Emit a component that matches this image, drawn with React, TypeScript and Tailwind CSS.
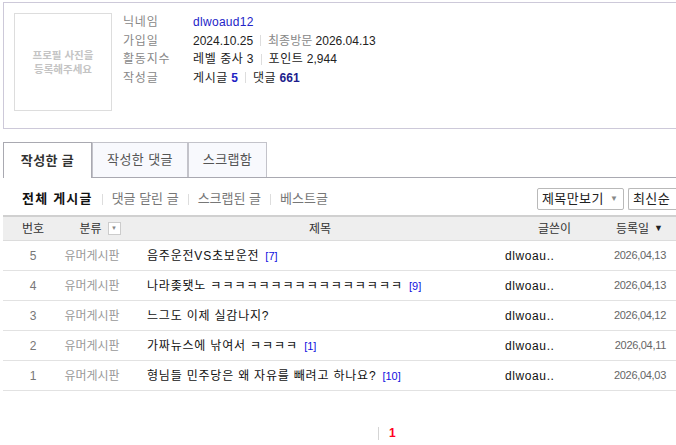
import React from "react";

type Post = {
  no: number;
  category: string;
  title: string;
  comments: number | null;
  author: string;
  date: string;
};

const POSTS: Post[] = [
  { no: 5, category: "유머게시판", title: "음주운전VS초보운전", comments: 7, author: "dlwoau..", date: "2026,04,13" },
  { no: 4, category: "유머게시판", title: "나라좆됏노 ㅋㅋㅋㅋㅋㅋㅋㅋㅋㅋㅋㅋㅋㅋㅋㅋ", comments: 9, author: "dlwoau..", date: "2026,04,13" },
  { no: 3, category: "유머게시판", title: "느그도 이제 실감나지?", comments: null, author: "dlwoau..", date: "2026,04,12" },
  { no: 2, category: "유머게시판", title: "가짜뉴스에 낚여서 ㅋㅋㅋㅋ", comments: 1, author: "dlwoau..", date: "2026,04,11" },
  { no: 1, category: "유머게시판", title: "형님들 민주당은 왜 자유를 빼려고 하나요?", comments: 10, author: "dlwoau..", date: "2026,04,03" },
];

const FONT = { fontFamily: '"Liberation Sans", "Noto Sans CJK KR", sans-serif' };
const COLS = "grid grid-cols-[60px_58px_379px_104px_1fr]";

// runs of ㅋ get a little extra spacing so they sit on a 12px pitch
function Title({ text }: { text: string }) {
  const parts = text.split(/(ㅋ+)/);
  return (
    <>
      {parts.map((part, i) =>
        part.startsWith("ㅋ") ? (
          <span key={i} className="tracking-[1px]">{part}</span>
        ) : (
          <span key={i}>{part}</span>
        )
      )}
    </>
  );
}

function Sep() {
  return <span className="mx-[7px] inline-block h-[11px] w-px bg-[#dddddd] align-[-1px]" />;
}

function ProfileRow({ label, children }: { label: string; children: React.ReactNode }) {
  return (
    <div className="flex h-[18.5px] items-center">
      <span className="w-[70px] tracking-[0.8px] text-[#888]">{label}</span>
      <span className="flex items-center text-[#222]">{children}</span>
    </div>
  );
}

export default function App() {
  const filters = ["댓글 달린 글", "스크랩된 글", "베스트글"];

  return (
    <div className="min-h-screen overflow-hidden bg-white pl-[3px] pt-[2px] text-[12px]" style={FONT}>
      {/* profile card */}
      <section className="flex h-[127px] border border-r-0 border-[#cdc9d9] pl-[10px] pt-[10px]">
        <div className="flex h-[98px] w-[98px] flex-col items-center justify-center border border-[#dddddd] text-[10.5px] font-bold leading-[14px] text-[#c4c4c4]">
          <span>프로필 사진을</span>
          <span>등록해주세요</span>
        </div>
        <div className="ml-[11px]">
          <ProfileRow label="닉네임">
            <span className="tracking-[0.3px] text-[#2323c8]">dlwoaud12</span>
          </ProfileRow>
          <ProfileRow label="가입일">
            2024.10.25<Sep />
            <span className="text-[#888]">최종방문</span>&nbsp;2026.04.13
          </ProfileRow>
          <ProfileRow label="활동지수">
            <span className="tracking-[0.6px]">레벨 중사</span>&nbsp;3<Sep />
            <span className="tracking-[0.6px]">포인트</span>&nbsp;2,944
          </ProfileRow>
          <ProfileRow label="작성글">
            <span className="tracking-[0.6px]">게시글</span>&nbsp;<b className="text-[#1f1fc4]">5</b>
            <Sep />
            <span className="tracking-[0.6px]">댓글</span>&nbsp;<b className="text-[#1c1c8c]">661</b>
          </ProfileRow>
        </div>
      </section>

      {/* tabs */}
      <div className="mt-[13px] flex h-[36px] border-b border-[#a9a9b1] text-[13px]">
        <div className="-mb-px flex w-[89px] items-center justify-center border border-b-0 border-[#a9a9b1] bg-white font-bold tracking-[0.4px] text-[#333]">
          작성한 글
        </div>
        <div className="flex w-[96px] items-center justify-center border border-b-0 border-[#c3c3ca] bg-[#f8f9fd] tracking-[0.4px] text-[#555]">
          작성한 댓글
        </div>
        <div className="flex w-[79px] items-center justify-center border border-b-0 border-[#c3c3ca] bg-[#f8f9fd] tracking-[0.4px] text-[#555]">
          스크랩함
        </div>
      </div>

      {/* list filters */}
      <div className="mt-[10px] flex h-[22px] items-center justify-between">
        <div className="flex items-center pl-[19px] text-[13px]">
          <span className="font-bold tracking-[1.2px] text-[#111]">전체 게시글</span>
          {filters.map((f) => (
            <span key={f} className="flex items-center text-[#777]">
              <span className="mx-[9px] inline-block h-[11px] w-px bg-[#dddddd]" />
              {f}
            </span>
          ))}
        </div>
        <div className="flex items-center gap-[4px] text-[13px] text-[#222]">
          <div className="flex h-[22px] w-[87px] items-center justify-between rounded-[2px] border border-[#b9b9b9] pl-[4px] pr-[5px]">
            <span className="tracking-[0.4px]">제목만보기</span>
            <span className="text-[8px] text-[#888]">▼</span>
          </div>
          <div className="flex h-[22px] w-[48px] items-center rounded-l-[2px] border border-r-0 border-[#b9b9b9] pl-[4px]">
            <span className="tracking-[0.4px]">최신순</span>
          </div>
        </div>
      </div>

      {/* post table */}
      <div className="mt-[5px]">
        <div className={`${COLS} h-[26px] items-center border-t-2 border-b border-t-[#d0d0d0] border-b-[#dcdcdc] bg-[#eeeeee] text-[#333]`}>
          <span className="text-center">번호</span>
          <span className="flex items-center justify-center gap-[6px] pl-[16px]">
            분류
            <span className="flex h-[13px] w-[13px] items-center justify-center border border-[#cccccc] bg-white text-[6px] text-[#888]">▼</span>
          </span>
          <span className="pl-[188px]">제목</span>
          <span className="pl-[38px]">글쓴이</span>
          <span className="flex items-center justify-end gap-[5px] pr-[13px]">
            등록일<span className="text-[9px] text-[#222]">▼</span>
          </span>
        </div>
        {POSTS.map((p) => (
          <div key={p.no} className={`${COLS} h-[30px] items-center border-b border-[#e2e2e2]`}>
            <span className="text-center text-[#777]">{p.no}</span>
            <span className="text-center text-[#999]">{p.category}</span>
            <span className="whitespace-nowrap pl-[26px] tracking-[0.8px] text-[#111]">
              <Title text={p.title} />
              {p.comments !== null && (
                <span className="ml-[6px] text-[11px] tracking-normal text-[#1010e0]">[{p.comments}]</span>
              )}
            </span>
            <span className="pl-[5px] tracking-[0.6px] text-[#111]">{p.author}</span>
            <span className="pr-[10px] text-right text-[11px] tracking-[-0.3px] text-[#666]">{p.date}</span>
          </div>
        ))}
      </div>

      {/* pagination */}
      <div className="mt-[33px] flex items-center pl-[375px]">
        <span className="inline-block h-[13px] w-px bg-[#d5d5d5]" />
        <span className="ml-[10px] font-bold text-[#ff0022]">1</span>
      </div>
    </div>
  );
}
